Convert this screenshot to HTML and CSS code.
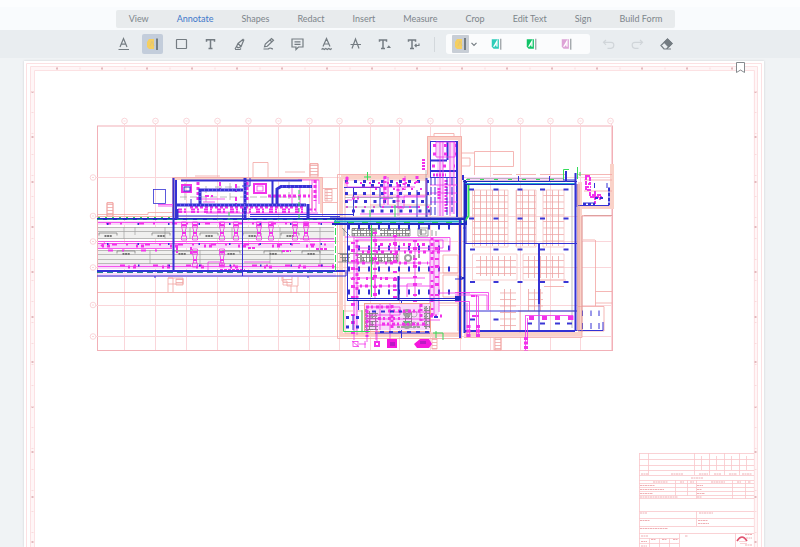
FILE: index.html
```html
<!DOCTYPE html>
<html lang="en">
<head>
<meta charset="utf-8">
<title>Plan viewer</title>
<link rel="stylesheet" href="styles.css">
</head>
<body>
<header class="tabs-row">
  <nav class="tabs" aria-label="Modes">
    <button class="tab">View</button>
    <button class="tab tab-active">Annotate</button>
    <button class="tab">Shapes</button>
    <button class="tab">Redact</button>
    <button class="tab">Insert</button>
    <button class="tab">Measure</button>
    <button class="tab">Crop</button>
    <button class="tab">Edit Text</button>
    <button class="tab">Sign</button>
    <button class="tab">Build Form</button>
  </nav>
</header>
<div class="toolbar" role="toolbar" aria-label="Annotation tools">
  <div class="tools">
    <button class="tool" aria-label="Underline"><svg viewBox="0 0 21 20"><path d="M7 13 10.500 4.500 14 13M8.300 10.200H12.800M5.500 15.500H16"/></svg></button>
    <button class="tool tool-active" aria-label="Highlight"><svg viewBox="0 0 21 20"><path class="yellow" d="M7 5h5v10H7l-2-2V8z"/><path class="pale" d="M8 12l2-5 2 5"/><path class="cursor" d="M15 4.500v11.500"/></svg></button>
    <button class="tool" aria-label="Rectangle"><svg viewBox="0 0 21 20"><rect x="5.500" y="5.500" width="10" height="9" rx=".5"/></svg></button>
    <button class="tool" aria-label="Free text"><svg viewBox="0 0 21 20"><path class="bold" d="M6.500 7.800V5.800h8v2M10.500 6v8.500M8.500 14.500h4"/></svg></button>
    <button class="tool" aria-label="Highlighter"><svg viewBox="0 0 21 20"><path d="M14.500 5 9 9.500l-1.500 3 1.500 1.300 3-1 3-7.300M9 9.500l3 3M6 15.500h5l1-1M7.500 12.500 6 15"/></svg></button>
    <button class="tool" aria-label="Pen"><svg viewBox="0 0 21 20"><path d="M6.500 12.800 7.300 10 13.500 4.500l2 1.800-6.200 6zM12 6l2 2M5.500 15h4.500c1 0 1-1 2-1s1 1 3 .8"/></svg></button>
    <button class="tool" aria-label="Note"><svg viewBox="0 0 21 20"><path d="M5 5h11v8h-4.500L9 15.500V13H5zM7.500 7.800h6M7.500 10.300h6"/></svg></button>
    <button class="tool" aria-label="Squiggly"><svg viewBox="0 0 21 20"><path d="M7 12.500 10.500 4.500l3.500 8M8.300 10h4.500M5.500 15.500l1.300-1 1.500 1 1.500-1 1.500 1 1.500-1 1.500 1 1.500-1"/></svg></button>
    <button class="tool" aria-label="Strikeout"><svg viewBox="0 0 21 20"><path d="M7 14.500 10.500 5l3.500 9.500M5.500 10.500h10.500"/></svg></button>
    <button class="tool" aria-label="Insert text"><svg viewBox="0 0 21 20"><path class="bold" d="M5.500 7.800V6h7v1.800M9 6v8.500M7 14.500h4"/><path d="M13.800 13.500l1-1.300 1 1.300z"/></svg></button>
    <button class="tool" aria-label="Replace text"><svg viewBox="0 0 21 20"><path class="bold" d="M5.500 7.800V6h7v1.800M9 6v8.500M7 14.500h4"/><path d="M12 11.500h4V9.500M13.500 10 12 11.500l1.500 1.500"/></svg></button>
  </div>
  <span class="divider"></span>
  <div class="presets">
    <button class="preset preset-active" aria-label="Yellow preset"><svg viewBox="0 0 17 18"><path class="yellow" d="M5 4h5v10H5l-2-2V7z"/><path class="pale" d="M6 11l2-5 2 5"/><path class="cursor" d="M13 3v12"/></svg></button>
    <button class="chevron" aria-label="Preset options"><svg viewBox="0 0 10 20"><path d="M2.500 8.800 5 11.300 7.500 8.800"/></svg></button>
    <button class="preset" aria-label="Teal preset"><svg viewBox="0 0 21 20"><path class="teal" d="M5 5h7.500v10H7l-2-2z"/><path class="letter" d="M7 13 10.500 7v6M8.500 11h2"/><path class="cursor thin" d="M14.500 4.500v11.500"/></svg></button>
    <button class="preset" aria-label="Green preset"><svg viewBox="0 0 21 20"><path class="green" d="M5 5h7.500v10H7l-2-2z"/><path class="letter" d="M7 13 10.500 7v6M8.500 11h2"/><path class="cursor thin" d="M14.500 4.500v11.500"/></svg></button>
    <button class="preset" aria-label="Pink preset"><svg viewBox="0 0 21 20"><path class="pink" d="M5 5h7.500v10H7l-2-2z"/><path class="letter" d="M7 13 10.500 7v6M8.500 11h2"/><path class="cursor thin" d="M14.500 4.500v11.500"/></svg></button>
  </div>
  <div class="tools">
    <button class="tool tool-off" aria-label="Undo"><svg viewBox="0 0 21 20"><path d="M8 6 5.500 8.300 8 10.800M5.500 8.300H13c4 0 3.500 6 0 6H9.500"/></svg></button>
    <button class="tool tool-off" aria-label="Redo"><svg viewBox="0 0 21 20"><path d="M13 6l2.500 2.300L13 10.800M15.500 8.300H8c-4 0-3.500 6 0 6h3.500"/></svg></button>
    <button class="tool" aria-label="Eraser"><svg viewBox="0 0 21 20"><path d="M5 11.500 11.500 5 16 9.500 10.500 15H8zM8.500 15H15"/><path class="solid" d="M8.200 8.300 11.500 5 16 9.500 12.700 12.800z"/></svg></button>
  </div>
</div>
<main class="viewer">
  <div class="sheet">
    <button class="bookmark" aria-label="Bookmark page"><svg viewBox="0 0 9 11"><path d="M.5.500h8v10L4.500 8 .5 10.500z"/></svg></button>
    <svg class="plan" viewBox="24 61 740 486" role="img" aria-label="Floor plan">
      <defs>
        <pattern id="cells" width="6" height="6.500" patternUnits="userSpaceOnUse"><path class="p-line" d="M0 .5H6M.5 0V6.500"/></pattern>
        <pattern id="hatch" width="3" height="3" patternUnits="userSpaceOnUse"><path class="p-line" d="M0 .5H3"/></pattern>
        <pattern id="machine" width="9" height="8" patternUnits="userSpaceOnUse"><path class="p-gray" d="M.5 0V8M2 1V7M3.500 1V6M6.500 0V8M0 1.500H9M0 4.500H5M0 6.500H9"/></pattern>
        <g id="bubble"><circle r="2.800"/><path d="M-1 0H1"/></g>
        <g id="duct" class="magenta"><path d="M-2.500 0h5v5h-5zM-2.500 5l1 3v6M2.500 5l-1 3v6M-2.500 14h5v4h-5z"/><path class="w2" d="M-2 3h4M-2 11h4"/></g>
        <g id="tag" class="gray dark-gray"><path d="M-9 2.500V0H9V2.500"/><path class="w2" stroke-dasharray="2 .6" d="M-3.500 3H4"/></g>
      </defs>

      <!-- sheet margins -->
      <g class="border">
        <path class="wash" d="M32 547V68.500H755.500V547"/>
        <path d="M26.500 547V63.500H761.500V547M30.500 547V66.500H757.500V547M34.500 547V70.500H754.500V547"/>
        <path class="ticks" stroke-dasharray="1 21.500" d="M57 68.500H750"/>
        <path class="ticks dark" stroke-dasharray="2 43" d="M56 68.500H750M32.500 91V547M755.500 91V547"/>
        <path class="ticks" stroke-dasharray="1 20" d="M32.500 91V547M755.500 91V547"/>
      </g>

      <!-- structural grid -->
      <g class="grid">
        <rect class="frame" x="97.500" y="126" width="515" height="224.500"/>
        <path d="M124.500 124V350M155.500 124V350M186.500 124V350M217.500 124V350M248.500 124V350M278.500 124V350M309.500 124V350M339.500 124V350M370.500 124V350M399.500 124V350M430.500 124V350M460.500 124V350M490.500 124V350M520.500 124V350M550.500 124V350M580.500 124V350M611.500 124V350"/>
        <path d="M96 177.500H612M96 216.500H612M96 241.500H612M96 267.500H612M96 305.500H612M96 336.500H612"/>
        <use href="#bubble" x="124.500" y="121"/><use href="#bubble" x="155.500" y="121"/><use href="#bubble" x="186.500" y="121"/><use href="#bubble" x="217.500" y="121"/><use href="#bubble" x="248.500" y="121"/><use href="#bubble" x="278.500" y="121"/><use href="#bubble" x="309.500" y="121"/><use href="#bubble" x="339.500" y="121"/><use href="#bubble" x="370.500" y="121"/><use href="#bubble" x="399.500" y="121"/><use href="#bubble" x="430.500" y="121"/><use href="#bubble" x="460.500" y="121"/><use href="#bubble" x="490.500" y="121"/><use href="#bubble" x="520.500" y="121"/><use href="#bubble" x="550.500" y="121"/><use href="#bubble" x="580.500" y="121"/><use href="#bubble" x="610.500" y="121"/>
        <use href="#bubble" x="93" y="177.500"/><use href="#bubble" x="93" y="216"/><use href="#bubble" x="93" y="241.500"/><use href="#bubble" x="93" y="267.500"/><use href="#bubble" x="93" y="305"/><use href="#bubble" x="93" y="336.500"/>
      </g>

      <!-- walls -->
      <g class="walls">
        <path class="wall" d="M341 177V335H462M341 177H427M429 177V138H460V335M580 182V334H464M579 207H612V164"/>
        <path class="wall slim" d="M174 218V179H321V213"/>
        <path d="M337.500 174.500H427.500V136.500H461.500V338.500H337.500zM343.500 180H427M345 180V333H459M434 136V133.500H454V136M172.500 216V177.500H322.500V216"/>
        <path d="M97 214.500H148V212.500H173M97 216.500H173M97 292.500H337M107 216V202.500H113V216M168 292V278H173V292M168 284H183V278H168M282 276H298V286H287V281H282zM291 286V293M297 286V293"/>
        <path d="M310 177V163.500H318V177M253 177V162.500H268V177M285 172H305M195 176H220M323 188.500H337M323 202.500H337M312 190V210M327 189V201"/>
        <path d="M474.500 175V151.500H513.500V166.500H474M461 153H474M462 158H470V166H462M493 174.500H512M516 174.500H536M540 174.500H566M577 174.500H612M584 180H612M584 191H612M582 216V332M582 215.500H612M595.500 240V306M595.500 291.500H612M595.500 303H612M583 240H595M578 306.500H604V331H578M344 311H362V333M443 255H458V273H443zM443 275H458V297H443zM432 303H458V331M494 338V350H501V338M520 311V333M464 337.500H582V332M539 280H566M544 286.500H564M345 273H458M345 195H430M370 205H430V216"/>
        <path class="hatch" d="M107 203h6v13h-6zM176 279h7v6h-7zM325 189h7v12h-7zM310 164h8v12h-8zM495 338h6v12h-6zM283 276h9v9h-9zM432 338h5v11h-5z"/>
        <path class="cells" d="M472 190h36v56h-36zM516 190h20v56h-20zM543 190h21v56h-21zM476 256h40v20h-40zM523 256h41v22h-41zM500 289h16v41h-16zM528 289h15v22h-15z"/>
        <path class="faint" d="M472.500 254H517V280H472.500zM523 254H564V280H523zM472.500 190H508V247H472.500zM516 190H536V247H516zM543 190H564V247H543z"/>
      </g>

      <!-- corridor -->
      <g>
        <path class="fill-gray" d="M98 227h236v12H98zM98 250h236v14H98z"/>
        <path class="fill-lilac" d="M98 243h236v5H98zM98 273h238v4H98zM98 264h236v5H98zM98 221h236v4H98z"/>
        <path class="gray" d="M98 227.500H334M98 231.500H334M98 238.500H334M98 250.500H334M98 254.500H334M98 259.500H334M98 263.500H334M124 227V239M150 250V264M165 227V239M200 250V264M232 227V239M280 227V239M270 250V264M320 227V264M135 227V235M190 227V239"/>
        <use href="#tag" x="108" y="233"/><use href="#tag" x="161" y="233"/><use href="#tag" x="209" y="233"/><use href="#tag" x="126" y="251"/><use href="#tag" x="182" y="251"/><use href="#tag" x="231" y="251"/><use href="#tag" x="252" y="233"/><use href="#tag" x="290" y="233"/><use href="#tag" x="273" y="251"/><use href="#tag" x="311" y="251"/>
        <path class="magenta" d="M98 241.500H335M98 243.500H300M98 222.500H335M98 266.500H335M98 248.500H172M244 262H270M208 270V262H222V266M300 239H334"/>
        <path class="magenta w2" stroke-dasharray="5 9 2 17" d="M106 223.500H335M112 244.500H335M108 250.500H172M120 265.500H334"/>
        <path class="magenta w3" stroke-dasharray="2 3 3 26" d="M102 246H335M128 267H335"/>
        <g><use href="#duct" x="184" y="222"/><use href="#duct" x="195" y="222"/><use href="#duct" x="222" y="222"/><use href="#duct" x="236" y="222"/><use href="#duct" x="259" y="222"/><use href="#duct" x="271" y="222"/><use href="#duct" x="295" y="222"/><use href="#duct" x="195" y="249"/><use href="#duct" x="222" y="249"/><use href="#duct" x="306" y="222"/></g>
        <path class="magenta w2" d="M177 247v6M191 247v8M248 248h8M282 251h9M316 249h12M101 246l4-3M220 270h25" stroke-dasharray="3 1"/>
        <path class="blue w2" stroke-dasharray="1.500 29" d="M107 224H335M107 244H335M138 265.500H335"/>
        <path class="navy w2" d="M97 219H465"/>
        <path class="teal-line" stroke-dasharray="6 4" d="M97 219.500H336M97 272.500H336"/>
        <path class="blue w2" d="M97 271H345M173.500 178V271"/><path class="blue" d="M97 276H346V270M242.500 205V276M155 276V278M308 276V278"/>
        <path class="green" d="M335.500 219V272" stroke-dasharray="7 2"/>
        <path class="green" d="M98 217.500H173" stroke-dasharray="2 5"/>
      </g>

      <!-- plant rooms over the corridor -->
      <g>
        <path class="gray" d="M180 197H300M206 186V202M230 183V202M289 182V202M215 187H240M185 183V200" stroke-dasharray="7 3"/>
        <rect class="blue thin" x="153.500" y="189.500" width="12" height="14"/>
        <path class="magenta" d="M158 204.500H173M158 206H173M200 199H225M203 202H215M298 180H319V204M312 180V212M316 180V212M292 187V205H300V187zM206 213H318M177 212H240"/>
        <rect class="magenta w2" x="182" y="185" width="9" height="7"/><rect class="blue" x="184" y="187" width="6" height="4"/>
        <rect class="magenta w2" x="254" y="184" width="12" height="9"/><rect class="magenta" x="257" y="186" width="6" height="5"/>
        <path class="magenta w3" stroke-dasharray="3 2" d="M198 182V200M247 182V200M315 180V201M268 196H310M190 207H305"/>
        <path class="magenta w2" stroke-dasharray="4 2 2 5" d="M178 209.500H318M205 196H218M178 212H305M220 182V195M236 184V205"/>
        <path class="blue w2" d="M176 180V219M181 180.500H302M272.500 180V205"/>
        <path class="blue w3" d="M177 209V219M177 205H306M245 178V219M200 204V190H243M277 204V189L281 186.500H312M308 204V218"/>
        <path class="lilac-line" stroke-dasharray="1 3" d="M180 205H305M204 190H242M282 186.500H311M200 192V203M245 182V216"/>
        <path class="blue" d="M250 214.500H354M250 216.500H340M178 216H245M191 199V205M242 186H250V178"/>
        <path class="green" d="M299 190V218M229 212V219" stroke-dasharray="4 2"/>
      </g>

      <!-- tower -->
      <g>
        <path class="fill-lilac" d="M437 141h6v75h-6zM449 142h5v72h-5z"/>
        <rect class="blue" x="430.500" y="141.500" width="27" height="36"/>
        <path class="blue w2" d="M447.500 141V160M430 160.500H447M430 171H457M457 141V217M426.500 178V217"/>
        <path class="magenta" d="M436 142H455V157H436zM440 142V216M443 142V216M450 142V216M454 142V214M430 185H457M430 193H457M430 202H457"/>
        <path class="magenta w3" stroke-dasharray="3 8" d="M433 145.500H456M433 154H456M432 166H455"/>
        <path class="magenta w3" stroke-dasharray="2 1" d="M423.500 159V170M433 175H446M446 180V212M439 188V200"/>
        <path class="blue" d="M431 177V217M435 177V216M447 177V216M452 177V212" stroke-dasharray="8 2"/>
      </g>

      <!-- central block, upper hall -->
      <g>
        <path class="fill-lilac" d="M396 188h7v20h-7zM383 178h6v28h-6z"/>
        <path class="blue w3" stroke-dasharray="3 6" d="M345 181.500H430M362 185.500H412M345 193.500H430"/>
        <path class="blue w3" stroke-dasharray="3 6.500" d="M345 201.500H430M352 211H430"/>
        <path class="blue" d="M344 187.500H380V207H420M353.500 188V216M380 198H393M417 190V217"/>
        <path class="magenta" d="M347 176V187H415M384 177V205M388 177V205M398 185V208H404V196H426V180M355 197H425M405 176V190M347 200H352M360 214H430"/>
        <path class="magenta w3" stroke-dasharray="3 2 2 4" d="M385 176V200M398 184V208M404 178V190M417 176V186M347 177V184M352 198H360"/>
        <path class="magenta w2" stroke-dasharray="2 7" d="M346 207H430M375 189H425M360 183H420"/>
        <path class="gray" d="M345 197.500H398V216M345 207H380M426 170V217"/>
        <path class="green" d="M367.500 172V180M364 177H371M370 210V217M395 205V217"/>
      </g>

      <!-- service band -->
      <path class="navy w2" d="M330 218.500H465V180M332 224H466V182"/>
      <path class="cyan w2" d="M334 221.500H462"/>
      <path class="green" stroke-dasharray="6 8" d="M334 222.500H462"/>

      <!-- central block, lower hall -->
      <g>
        <path class="fill-lilac" d="M430 240h9v75h-9zM356 238h92v3h-92zM353 240h4v92h-4z"/>
        <path class="machine" d="M352 228h24v8h-24zM380 229h30v7h-30zM340 254h10v8h-10zM357 254h41v8h-41z"/>
        <path class="gray dark-gray" d="M352 228.500H410V236H352zM338 253.500H398V262H338M418 228H428V236H418zM420 230h6v4h-6zM432 230V236M436 231V236M342 228L350 236M344 228V236"/>
        <circle class="gray w2" cx="408" cy="258" r="3"/><circle class="gray w2" cx="374" cy="231" r="2"/><path class="gray w2" d="M414 255v5M419 254v4M361 254v8M421 229v6"/>
        <path class="blue columns" d="M348 227H458M348 248H450M348 269H450M348 292H450"/>
        <path class="magenta" d="M355 237.500H450V251H357M355 240H443V248H357M354 237V340M357 240V335M375 230V296M395 237V262M415 240V297M430 240V316M434 240V316M439 240V312M347 263H430M350 278H425M357 286H430M345 237H355M439 293H470M407 297V284H422M375 278V298"/>
        <path class="magenta w3" stroke-dasharray="2 3 3 6" d="M375 244.500H430M362 252H445M357 263H428M352 278.500H400M360 286H402M432 238V316M357 240V300"/>
        <path class="magenta w4" stroke-dasharray="2 5 3 8" d="M353 242V334M375 232V298M395 235V300M415 240V302M437 240V300"/>
        <path class="green" d="M371.500 225V297"/>
        <path class="blue" d="M347.500 222V300M358.500 300V310M466 225V244M455 279H463" />
        <path class="navy" d="M347 298.500H460M347 300.500H460"/><path class="navy w2" d="M398.500 276V300"/>
        <path class="blue" d="M401.500 300V338"/><path class="blue w2" d="M460 220V338"/>
      </g>

      <!-- lower plant -->
      <g>
        <path class="fill-lilac" d="M364 304h66v26h-66z"/>
        <path class="machine" d="M366 311h12v19h-12zM403 312h9v14h-9zM424 306h7v22h-7z"/>
        <rect class="walls-line" x="364.500" y="303.500" width="66" height="28"/>
        <path class="gray w2" d="M366 309V330M370 316H377M397 327H420M426 307V329" stroke-dasharray="3 1"/>
        <circle class="gray w3" cx="407" cy="313" r="2.500"/><circle class="gray w3" cx="407" cy="325" r="2.500"/><circle class="gray" cx="414" cy="314" r="3"/><circle class="gray" cx="414" cy="325" r="3"/>
        <path class="magenta" d="M367 307H400V315H370V325H430M380 304V330M390 303V345M395 312H430M367 319H425M376 320V340M420 305V320H440M367 307V342"/>
        <path class="magenta w3" stroke-dasharray="3 2 2 3" d="M366 307H392M378 318.500H400M382 324H425M392 305V330M367 310V340M421 304V321M430 316H442M388 311H420"/>
        <path class="blue w2" stroke-dasharray="4 5" d="M372 311.500H402M380 332H430M434 317H439"/>
        <path class="blue w3" stroke-dasharray="3 7" d="M346 317.500H360M346 327H360"/>
        <path class="green" d="M343.500 310V331.500H370M362 310V332M404 322H410M433 333H443V340M436 331V338"/>
        <path class="blue" d="M375 333H430M353 315V330"/>
        <rect class="magenta" x="353" y="341.500" width="5" height="5"/><rect class="magenta w2" x="375" y="342" width="4" height="4"/>
        <path class="magenta" d="M359 344H366M365 341V348M352 341l7 6M377 330V341"/>
        <rect class="solid-magenta" x="387" y="339" width="10" height="9"/><path class="solid-magenta" d="M414 344l6-5h9l3 5-3 4h-12z"/><path class="violet" d="M390 342h5v4h-5zM420 341h6v3h-6z"/>
      </g>

      <!-- hall on the right -->
      <g>
        <path class="fill-lilac" d="M466 177h98v4H466z"/>
        <path class="gray" d="M467 178.500H564M467 181H575M572 184V328M518 311H575"/>
        <path class="green w2" d="M468.500 184V216L464 222"/><path class="green" d="M563.500 180V169.500H569M577.500 167V179"/>
        <path class="cyan" d="M465 183.500H576"/><path class="navy" d="M463 181.500H577M466 184.500H575"/><path class="navy w2" d="M464.500 180V333"/>
        <path class="green" stroke-dasharray="4 10" d="M466 179.500H564M580 172V180"/>
        <path class="blue w2" d="M575.500 173V331M566 171V182M463 175V180"/>
        <path class="blue" d="M464 243.500H577M539 243.500V331M464 311H577M464 330.500H603V322M563 180H575M463 228H466M518.500 176V182M549.500 176V182"/>
        <path class="blue w2" d="M464 331H575M539 243.500V304"/>
        <path class="marks" d="M469 189.500h5M493.500 189.500h5M517.500 189.500h5M540 189.500h5M563.500 189.500h5M469 218.500h5M493.500 218.500h5M517.500 218.500h5M540 218.500h5M563.500 218.500h5M470 249.500h5M493.500 249.500h5M517.500 249.500h5M540 249.500h5M563.500 249.500h5M470 282h5M493.500 282h5M517.500 282h5M540 282h5M563.500 282h5M470 319.500h5M493.500 319.500h5M527 323.500h5M540 323.500h5M555 323.500h5M567 323.500h5"/>
        <path class="magenta" d="M455 292.500H488.500V310M455 295H487V310M455 301.500H469.500V337M467 303V337M472 296H478.500V336M476.500 297V335M525.500 316V350M527.500 318V342M525 315.500H573V320"/>
        <path class="magenta w4" stroke-dasharray="3 1.500" d="M468.500 325V338M478 325V338M526 337V351"/>
        <path class="magenta w4" stroke-dasharray="5 8" d="M529 318H573"/>
        <path class="magenta w2" d="M472 316h7M471 296h6M586 176V190H590V195H600V200M586 176h4v8h-4zM595 191V204M585 187h6M590 197h12" stroke-dasharray="4 1"/>
        <path class="blue" d="M578 205.500H609V187M577 184V207M594.500 183V188M607 183V188M583 203H595"/>
        <path class="blue w2" stroke-dasharray="3 2" d="M583 204H595M609 188V205M595 198h10"/>
        <path class="blue" d="M582.500 310.500V316M591 310.500V316M599 310.500V316M582.500 323V329M591 323V329M599 323V329M544 331.500H560"/>
        <path class="brown" d="M582 216V332M579 184V331M577.500 184V331M584 215.500H612"/>
        <path class="navy w2" d="M460.500 276v4M462 278h2M455 297h6M455 299h6"/>
      </g>

      <!-- title block -->
      <g class="title-block">
        <path d="M639 453.500H754M639 459.500H754M639 465.500H754M639 470.500H754M639 475.500H754M639.500 453V547M648.500 453V475M694.500 453V475M709.500 453V475M724.500 453V475M739.500 453V475M701.500 456V470M716.500 456V470M731.500 456V470M746.500 456V470"/>
        <path d="M639 480.500H754M639 483.500H754M639 487.500H754M639 491.500H754M639 495.500H754M639 498.500H754M675.500 480V496M687.500 480V496M696.500 480V499M732.500 480V499M745.500 480V499M639 511.500H754M639 518.500H754M639 526.500H754M639 533.500H754M696.500 511V526M735.500 533V547M679.500 533V547M639 538.500H679M639 543.500H679M649.500 538V547M659.500 538V547M669.500 538V547"/>
        <path class="scribble" d="M641 474H648M671 474H683M699 474H708M714 474H721M729 474H737M742 474H752M691 478H703M653 482H668M680 482H684M690 482H694M711 482H725M737 482H741M748 482H751M640 485.500H655M640 489.500H664M640 493.500H653M640 497H678M697 485.500H703M697 489.500H702M697 493.500H705M697 497H702M640 513H647M699 513H713M640 520.500H650M698 520.500H708M698 523.500H709M640 528.500H668M641 536H648M685 536H688M651 539.500H656M662 539.500H667M673 539.500H678M641 541.500H647M641 546H647M745 534.500H752M746 538H752M745 545H752"/>
        <path class="logo" d="M737 541q5-8 10 0"/><path d="M739 541.500H746M740 543.500H747"/>
      </g>
    </svg>
  </div>
</main>
</body>
</html>
```
FILE: styles.css
```css
* { box-sizing: border-box; }

body {
  margin: 0;
  height: 100vh;
  display: flex;
  flex-direction: column;
  overflow: hidden;
  background: #fcfdfe;
  color: #7d858b;
  font: 9px/18px Lato, sans-serif;
}

button {
  margin: 0;
  padding: 0;
  border: 0;
  background: none;
  color: inherit;
  font: inherit;
}

button svg { display: block; width: 100%; height: 100%; fill: none; stroke: currentColor; stroke-width: 1.2; }

.tabs-row {
  display: flex;
  justify-content: center;
  margin-top: 7px;
  padding: 3px 9px 2px 0;
  background: #f9fbfd;
}

.tabs { display: flex; gap: 28px; padding: 0 13px; background: #e8ebed; border-radius: 2px; }
.tab { white-space: nowrap; }
.tab-active { color: #3f78cb; }

.toolbar {
  display: flex;
  justify-content: center;
  align-items: center;
  padding: 4px 10px 4px 0;
  background: #e9edf0;
}

.tools { display: flex; gap: 8px; }
.tool { width: 21px; height: 20px; border-radius: 2px; color: #747c82; }
.tool-active { background: #c3cddb; }
.tool-off { color: #d0d5d9; }
.divider { width: 1px; height: 15px; margin: 0 11px 0 10px; background: #d3d8dc; }

.presets {
  display: flex;
  margin-right: 8px;
  padding: 0 13px 0 6px;
  border-radius: 3px;
  background: #fbfcfd;
}

.preset { width: 20px; height: 20px; margin-left: 15px; }
.preset-active { width: 17px; height: 18px; margin: 1px 0; background: #c8ced6; border-radius: 1px; }
.chevron { width: 10px; height: 20px; margin-right: -7px; color: #747c82; }

button .yellow { fill: #f5cf61; stroke: none; }
button .teal { fill: #2dcdb9; stroke: none; }
button .green { fill: #12c468; stroke: none; }
button .pink { fill: #dda3d6; stroke: none; }
button .pale { stroke: #e4c574; stroke-width: 1; }
button .letter { stroke: #fff; stroke-width: 1.2; }
button .cursor { stroke: #596269; stroke-width: 1.5; }
button .thin { stroke: #7a8288; stroke-width: 1; }
button .bold { stroke-width: 1.5; }
button .solid { fill: currentColor; }

.viewer {
  flex: 1;
  min-height: 0;
  padding: 3px 4.5% 0 3%;
  overflow: hidden;
  background: #f0f3f5;
}

.sheet { position: relative; background: #fff; box-shadow: 0 0 2px #c9cdd0; }
.bookmark { position: absolute; top: 1px; right: 19px; width: 9px; height: 11px; color: #858a8e; }
.bookmark svg { fill: #fff; stroke-width: 1; }

.plan { display: block; width: 100%; fill: none; stroke-width: 1; }
.plan .border { stroke: #fce1e3; }
.plan .border .wash { stroke: #fff6f7; stroke-width: 4; }
.plan .border .ticks { stroke: #f9dcde; stroke-width: 2; }
.plan .border .dark { stroke: #e3b9bd; stroke-width: 2; }
.plan .grid { stroke: #fad6da; }
.plan .grid .frame { stroke: #f2b0b7; }
.plan .walls { stroke: #f2a5a2; stroke-width: .8; }
.plan .wall { stroke: #fad2c8; stroke-width: 4; }
.plan .slim { stroke-width: 2; }
.plan .walls .hatch { fill: url(#hatch); }
.plan .walls .cells { fill: url(#cells); stroke: none; }
.plan .walls .faint { stroke: #f5c4c4; }
.plan .walls-line { stroke: #f2a08f; }
.plan .p-line { stroke: #eda6a6; stroke-width: .8; }
.plan .p-gray { stroke: #777; stroke-width: .8; }
.plan .machine { fill: url(#machine); }
.plan .fill-gray { fill: #f0f0ef; }
.plan .fill-lilac { fill: #f9d9fa; }
.plan .solid-magenta { fill: #f417dd; }
.plan .violet { fill: #b81bc3; }
.plan .gray { stroke: #a0a0a0; stroke-width: .7; }
.plan .dark-gray { stroke: #777; }
.plan .magenta { stroke: #f232ea; stroke-width: .8; }
.plan .lilac-line { stroke: #6a5cf0; stroke-width: 2; }
.plan .blue { stroke: #3431d4; stroke-width: 1; }
.plan .navy { stroke: #1f28c2; }
.plan .cyan { stroke: #22a9d0; stroke-width: 1; }
.plan .green { stroke: #35dc5a; stroke-width: 1; }
.plan .teal-line { stroke: #218895; stroke-width: 1; }
.plan .brown { stroke: #d99a98; stroke-width: .8; }
.plan .marks { stroke: #3a37d6; stroke-width: 2; }
.plan .thin { stroke-width: .8; }
.plan .w2 { stroke-width: 2; }
.plan .w3 { stroke-width: 3; }
.plan .w4 { stroke-width: 4; }
.plan .columns { stroke-width: 5; stroke-dasharray: 2 8; }
.plan .title-block { stroke: #f9c6ca; stroke-width: .8; }
.plan .title-block .scribble { stroke: #eeb0b5; stroke-width: 1; stroke-dasharray: 2 .5; }
.plan .title-block .logo { stroke: #e0526e; stroke-width: 1.6; }
```
